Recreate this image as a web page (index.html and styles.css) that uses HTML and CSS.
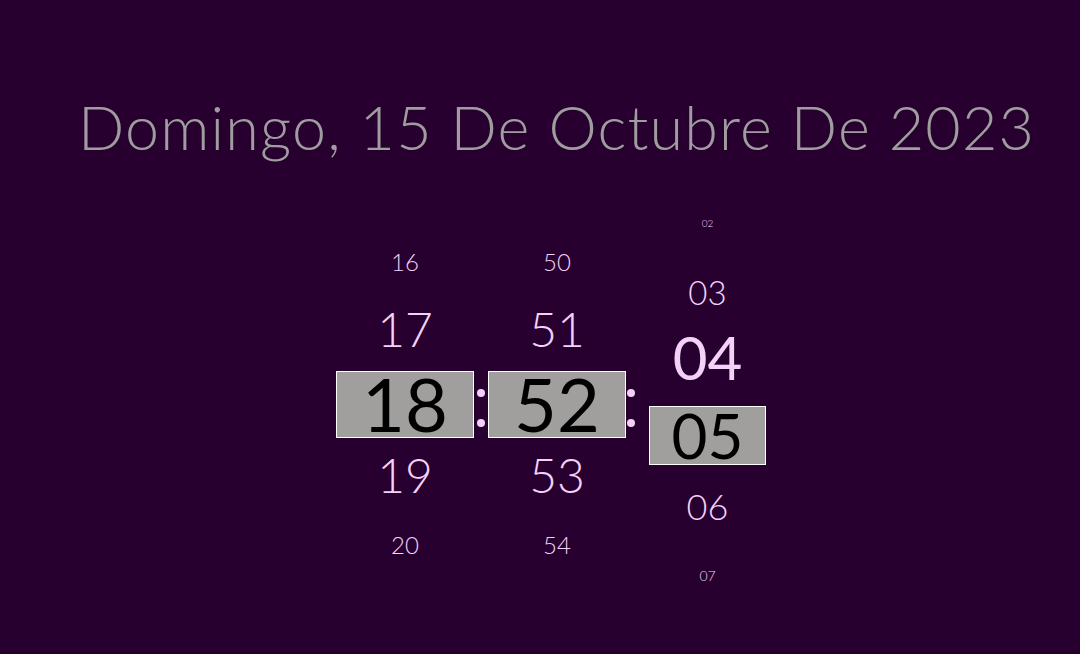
FILE: index.html
```html
<!DOCTYPE html>
<html lang="es">
<head>
<meta charset="utf-8">
<title>Reloj</title>
<link rel="stylesheet" href="styles.css">
</head>
<body>
<main class="page">
  <h1 class="date">Domingo, 15 De Octubre De 2023</h1>
  <section class="clock">
    <div class="col col-hm">
      <div class="item far-up">16</div>
      <div class="item near-up">17</div>
      <div class="active active-hm">18</div>
      <div class="item near-down">19</div>
      <div class="item far-down">20</div>
    </div>
    <div class="colon colon-1"><span class="dot"></span><span class="dot"></span></div>
    <div class="col col-hm">
      <div class="item far-up">50</div>
      <div class="item near-up">51</div>
      <div class="active active-hm">52</div>
      <div class="item near-down">53</div>
      <div class="item far-down">54</div>
    </div>
    <div class="colon colon-2"><span class="dot"></span><span class="dot"></span></div>
    <div class="col col-s">
      <div class="item s-m3">02</div>
      <div class="item s-m2">03</div>
      <div class="item s-m1">04</div>
      <div class="active active-s">05</div>
      <div class="item s-p1">06</div>
      <div class="item s-p2">07</div>
    </div>
  </section>
</main>
</body>
</html>
```
FILE: styles.css
```css
html, body {
  margin: 0;
  padding: 0;
  background: #280030;
  height: 100%;
  overflow: hidden;
}

.page {
  font-family: "Lato", "Noto Sans", sans-serif;
  font-weight: 300;
  display: flex;
  flex-direction: column;
  padding-top: 91px;
}

.date {
  margin: 0;
  font-size: 61px;
  font-weight: 300;
  line-height: 72px;
  letter-spacing: 1.2px;
  color: #9e9e9e;
  text-align: center;
  padding-left: 33px;
}

.clock {
  margin-top: 9px;
  display: flex;
  align-items: flex-start;
  justify-content: center;
  padding-left: 22px;
}

.col {
  display: flex;
  flex-direction: column;
  align-items: center;
}

.col-hm {
  margin-top: 63px;
  width: 138px;
}

.col-s {
  width: 117px;
}

.item {
  color: #f3d2f8;
  text-align: center;
  width: 100%;
}

.far-up { height: 54px; line-height: 54px; font-size: 24px; }
.near-up { height: 82px; line-height: 80px; font-size: 48px; }
.near-down { height: 76px; line-height: 74px; font-size: 48px; }
.far-down { height: 62px; line-height: 62px; font-size: 24px; }

.active {
  box-sizing: border-box;
  width: 100%;
  background: #a09f9d;
  border: 1px solid #ffffff;
  color: #000000;
  text-align: center;
}

.active-hm {
  height: 67px;
  line-height: 63px;
  font-size: 74px;
  font-weight: 400;
}

.active-s {
  height: 59px;
  line-height: 57px;
  font-size: 62px;
  font-weight: 400;
}

.s-m3 { height: 103px; line-height: 103px; font-size: 10px; }
.s-m2 { height: 34px; line-height: 34px; font-size: 33px; }
.s-m1 { height: 97px; line-height: 97px; font-size: 60px; font-weight: 400; }
.s-p1 { height: 82px; line-height: 82px; font-size: 36px; }
.s-p2 { height: 58px; line-height: 58px; font-size: 14px; }

.colon {
  display: flex;
  flex-direction: column;
  align-items: center;
  gap: 22px;
  margin-top: 217px;
}

.colon-1 { width: 14px; }
.colon-2 { width: 10px; margin-right: 13px; }

.dot {
  width: 8px;
  height: 8px;
  border-radius: 50%;
  background: #f3d2f8;
}
```
